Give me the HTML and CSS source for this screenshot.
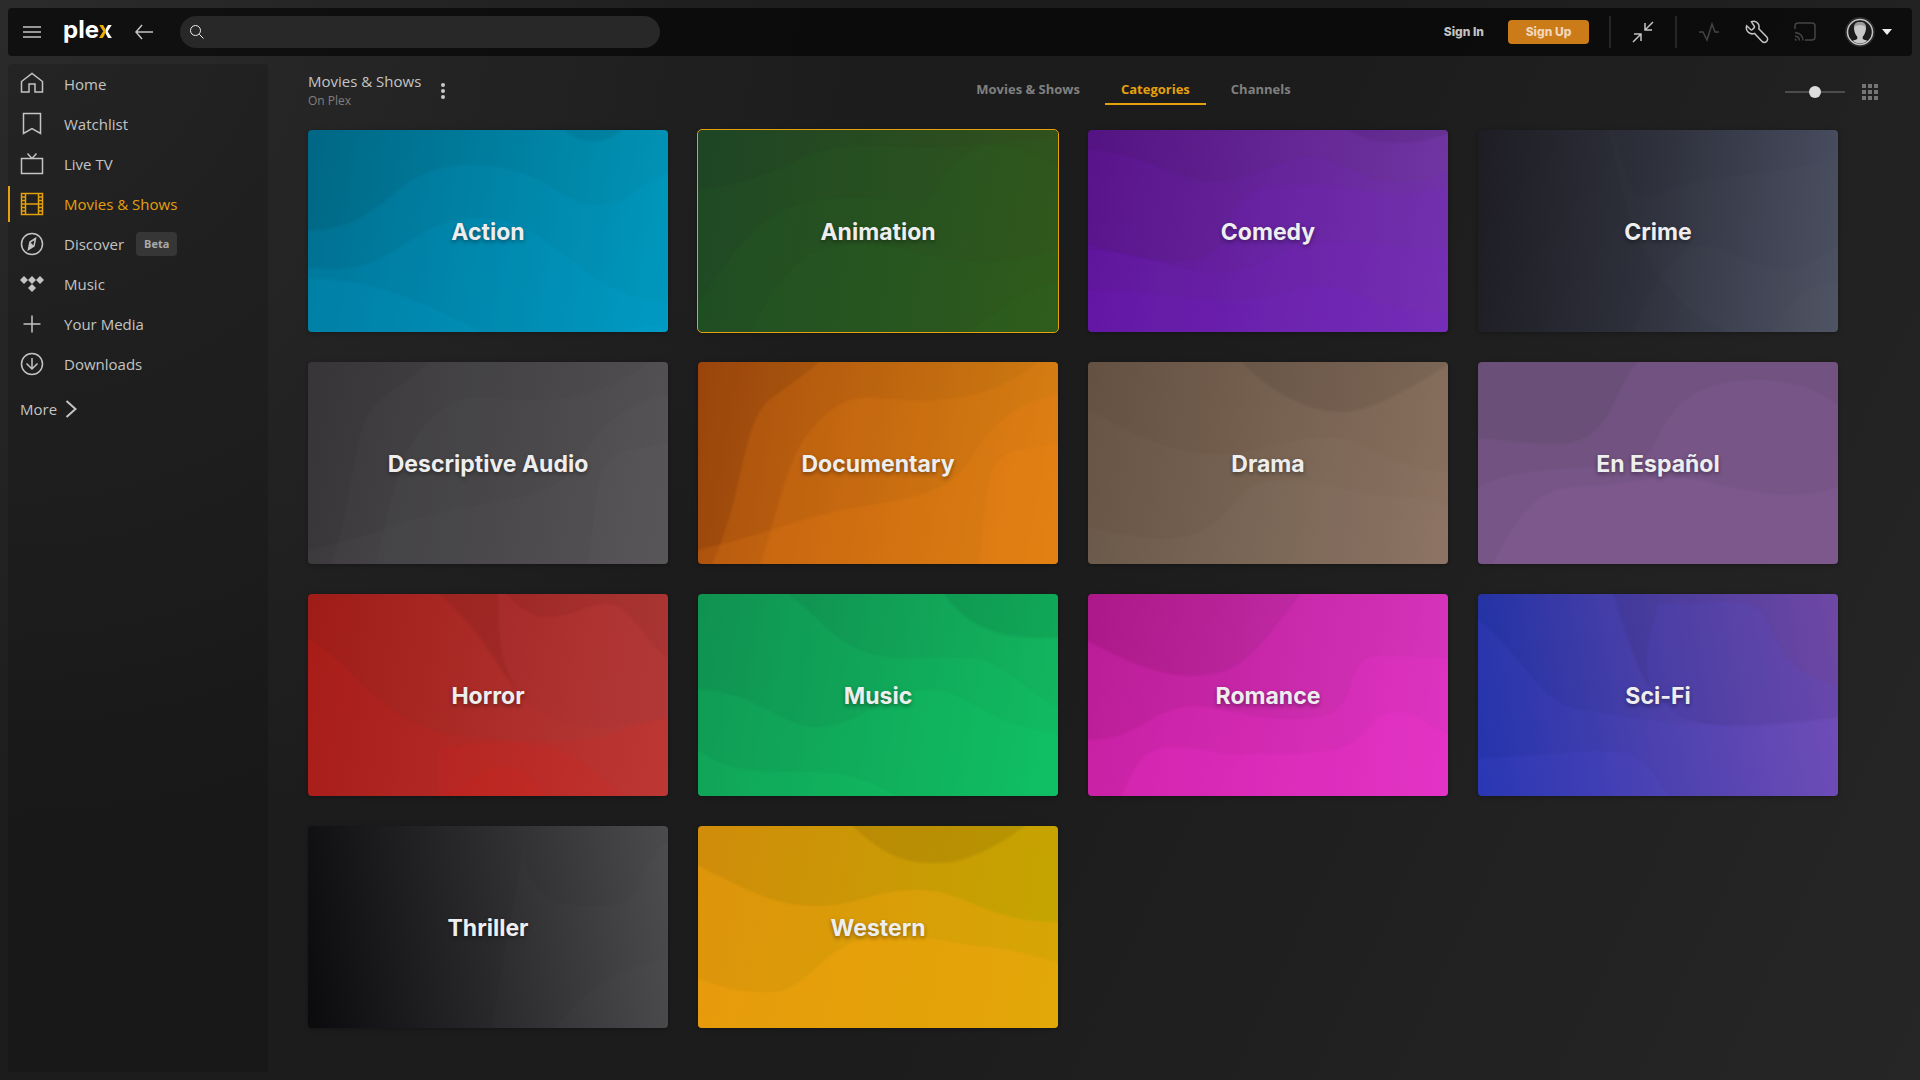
FILE: index.html
```html
<!DOCTYPE html>
<html lang="en">
<head>
    <meta charset="UTF-8">
    <meta name="viewport" content="width=device-width, initial-scale=1.0">
    <title>Plex</title>
    <link rel="stylesheet" href="styles.css">
</head>
<body>
    <header class="navbar">
        <button class="icon-btn menu-btn" aria-label="Menu">
            <svg width="18" height="12" viewBox="0 0 18 12"><path d="M0 1h18M0 6h18M0 11h18"/></svg>
        </button>
        <a href="#" class="logo">ple<span>x</span></a>
        <button class="icon-btn back-btn" aria-label="Back">
            <svg width="20" height="16" viewBox="0 0 20 16"><path d="M19 8H2M8 1L2 8l6 7"/></svg>
        </button>
        <label class="search">
            <svg width="16" height="16" viewBox="0 0 16 16"><circle cx="6.5" cy="6.5" r="5"/><path d="M10.3 10.3L14.500 14.500"/></svg>
            <input type="search" aria-label="Search">
        </label>

        <div class="nav-right">
            <a href="#" class="sign-in">Sign In</a>
            <button class="sign-up">Sign Up</button>
            <div class="divider"></div>
            <button class="icon-btn" aria-label="Collapse">
                <svg width="22" height="22" viewBox="0 0 22 22"><path d="M21 1l-8 8M13 2v7h7M1 21l8-8M2 13h7v7"/></svg>
            </button>
            <div class="divider"></div>
            <button class="icon-btn dim" aria-label="Activity">
                <svg width="22" height="20" viewBox="0 0 22 20"><path d="M1 10h4l4 8 5-16 3 8h4"/></svg>
            </button>
            <button class="icon-btn" aria-label="Settings">
                <svg width="24" height="24" viewBox="0 0 24 24"><path d="M6.500 1.800C8.800.8 11.500 1.500 13 3.500c1.200 1.600 1.300 3.400.8 5.200l8 8.200c1.300 1.500.9 3.600-.4 4.700-1.300 1.100-3.100 1-4.300-.2l-7.600-8c-2.400.9-5 .3-6.700-1.600C1.200 10 1 7.800 1.700 5.800l3.900 3.700c.5.5 1.300.5 1.800 0l1.600-1.600c.6-.6.6-1.400 0-2z"/></svg>
            </button>
            <button class="icon-btn dim" aria-label="Cast">
                <svg width="22" height="20" viewBox="0 0 22 20"><path d="M1 7V4q0-3 3-3h14q3 0 3 3v11q0 3-3 3h-7M1 10.500q7.500.5 8 8M1 14q4 .5 4.500 4.500M1 17l1.500 1.500"/></svg>
            </button>
            <button class="icon-btn account" aria-label="Account">
                <svg width="30" height="30" viewBox="0 0 30 30">
                    <circle class="ring-outer" cx="15" cy="15" r="15"/>
                    <circle class="ring" cx="15" cy="15" r="12.500"/>
                    <path class="face" d="M15 5c4 0 6.200 2.600 6 6.500-.2 3.700-1.600 6.500-3.300 8.200v2.100c1 1 3.200 1.300 4.600 2.200A12 12 0 0 1 7.700 24c1.400-.9 3.600-1.200 4.600-2.200v-2.100C10.600 18 9.200 15.200 9 11.500 8.800 7.600 11 5 15 5z"/>
                    <path class="hair" d="M9 11C9 7 11 5 15 5s6 2 6 6c-1-2-3-3-6-3s-5 1-6 3z"/>
                </svg>
                <svg class="caret" width="10" height="6" viewBox="0 0 10 6"><path d="M0 0h10L5 6z"/></svg>
            </button>
        </div>
    </header>

    <div class="layout">
        <nav class="sidebar">
            <a href="#" class="item">
                <svg width="24" height="24" viewBox="0 0 24 24"><path d="M1.500 9.500L12 1.500l10.500 8v10.500h-7.500v-8H9v8H1.500z"/></svg>
                Home
            </a>
            <a href="#" class="item">
                <svg width="24" height="24" viewBox="0 0 24 24"><path d="M3.500 1.500h17v20L12 16.500l-8.500 5z"/></svg>
                Watchlist
            </a>
            <a href="#" class="item">
                <svg width="24" height="24" viewBox="0 0 24 24"><path d="M1.500 6.500h21v15h-21zM7.500 1.500l4.500 5 4.500-5"/></svg>
                Live TV
            </a>
            <a href="#" class="item active">
                <svg width="24" height="24" viewBox="0 0 24 24"><path d="M1.500 1.500h21v21h-21zM5.500 1.500v21M18.500 1.500v21M5.500 12h13M1.500 5h4M1.500 8.500h4M1.500 12h4M1.500 15.500h4M1.500 19h4M18.500 5h4M18.500 8.500h4M18.500 12h4M18.500 15.500h4M18.500 19h4"/></svg>
                Movies &amp; Shows
            </a>
            <a href="#" class="item">
                <svg width="24" height="24" viewBox="0 0 24 24"><circle cx="12" cy="12" r="10.500"/><path d="M15.500 6.500L10 10l-1.500 7.500 5.500-3.500z"/><path class="solid" d="M10 10l4 4-5.500 3.500z"/></svg>
                Discover
                <span class="badge">Beta</span>
            </a>
            <a href="#" class="item">
                <svg width="24" height="24" viewBox="0 0 24 24"><path class="solid" d="M4 4l4 4-4 4-4-4zM12 4l4 4-4 4-4-4zM20 4l4 4-4 4-4-4zM12 12l4 4-4 4-4-4z"/></svg>
                Music
            </a>
            <a href="#" class="item">
                <svg width="24" height="24" viewBox="0 0 24 24"><path d="M12 3.500v17M3.500 12h17"/></svg>
                Your Media
            </a>
            <a href="#" class="item">
                <svg width="24" height="24" viewBox="0 0 24 24"><circle cx="12" cy="12" r="10.500"/><path d="M12 6v11M6.500 11.500l5.500 5.500 5.500-5.500"/></svg>
                Downloads
            </a>
            <a href="#" class="more">
                More
                <svg width="12" height="18" viewBox="0 0 12 18"><path d="M1.500 1l9 8-9 8"/></svg>
            </a>
        </nav>

        <main class="content">
            <div class="toolbar">
                <div class="heading">
                    <div>
                        <h1>Movies &amp; Shows</h1>
                        <p>On Plex</p>
                    </div>
                    <button class="icon-btn dots" aria-label="More actions">
                        <svg width="4" height="16" viewBox="0 0 4 16"><circle cx="2" cy="2" r="2"/><circle cx="2" cy="8" r="2"/><circle cx="2" cy="14" r="2"/></svg>
                    </button>
                </div>
                <div class="tabs">
                    <a href="#">Movies &amp; Shows</a>
                    <a href="#" class="selected">Categories</a>
                    <a href="#">Channels</a>
                </div>
                <div class="view">
                    <input type="range" min="0" max="100" value="50" aria-label="Card size">
                    <button class="icon-btn" aria-label="Grid view">
                        <svg class="squares" width="16" height="16" viewBox="0 0 16 16"><path d="M0 0h4v4H0zM6 0h4v4H6zM12 0h4v4h-4zM0 6h4v4H0zM6 6h4v4H6zM12 6h4v4h-4zM0 12h4v4H0zM6 12h4v4H6zM12 12h4v4h-4z"/></svg>
                    </button>
                </div>
            </div>

            <div class="grid">
                <a href="#" class="card action">
                    <svg class="waves" viewBox="0 0 360 202" preserveAspectRatio="none">
                        <path class="dark" d="M250 -9C265 18 305 18 320 -9z"/>
                        <path d="M-9 100C80 105 80 35 160 35S250 75 290 75 330 43 369 43V220H-9z"/>
                        <path d="M-9 135C90 155 90 90 170 88S270 172 369 172V220H-9z"/>
                        <path d="M-9 148C70 148 110 170 190 210V220H-9z"/>
                        <path d="M280 210Q320 195 369 193V220z"/>
                    </svg>
                    <span>Action</span>
                </a>
                <a href="#" class="card animation focused">
                    <svg class="waves" viewBox="0 0 360 202" preserveAspectRatio="none">
                        <path d="M-9 60C80 55 100 15 160 15S210 25 369 5V220H-9z"/>
                        <path d="M-9 190C50 90 80 68 150 68S230 80 240 55 280 15 300 15 350 30 369 40V220H-9z"/>
                        <path d="M50 210C90 120 120 110 180 115S270 150 369 115V220z"/>
                        <path d="M250 210C300 190 310 160 369 150V220z"/>
                    </svg>
                    <span>Animation</span>
                </a>
                <a href="#" class="card comedy">
                    <svg class="waves" viewBox="0 0 360 202" preserveAspectRatio="none">
                        <path class="dark" d="M250 -9C270 18 330 18 369 0V-9z"/>
                        <path d="M-9 20C60 20 80 50 120 52S190 28 220 27 270 52 310 52 340 45 369 40V220H-9z"/>
                        <path d="M-9 112C50 130 130 150 140 100S190 55 230 55 280 65 300 65 340 60 369 58V220H-9z"/>
                        <path d="M-9 120C60 120 90 143 130 143S190 115 230 112 300 120 369 118V220H-9z"/>
                        <path d="M-9 160C80 160 100 172 150 170S200 155 230 155 290 185 369 182V220H-9z"/>
                    </svg>
                    <span>Comedy</span>
                </a>
                <a href="#" class="card crime">
                    <svg class="waves" viewBox="0 0 360 202" preserveAspectRatio="none">
                        <path d="M130 -9C160 50 140 80 190 60S280 50 369 25V220C280 220 160 220 130 -9z"/>
                        <path d="M150 210C200 90 230 110 270 130S320 140 369 110V220z"/>
                        <path d="M290 210C310 170 330 150 369 150V220z"/>
                    </svg>
                    <span>Crime</span>
                </a>
                <a href="#" class="card descriptive">
                    <svg class="waves" viewBox="0 0 360 202" preserveAspectRatio="none">
                        <path d="M20 210C50 130 40 60 75 35S110 10 130 -9H369V220z"/>
                        <path d="M65 210C85 130 90 90 120 60S160 35 210 38 310 30 350 -9H369V220z"/>
                        <path d="M-9 190C80 170 100 155 160 145S250 130 270 100 310 40 369 30V220H-9z"/>
                        <path d="M280 210C290 130 285 95 320 88L369 80V220z"/>
                    </svg>
                    <span>Descriptive Audio</span>
                </a>
                <a href="#" class="card documentary">
                    <svg class="waves" viewBox="0 0 360 202" preserveAspectRatio="none">
                        <path d="M10 210C50 130 40 60 75 35S110 10 130 -9H369V220z"/>
                        <path d="M60 210C85 130 90 90 120 60S160 35 210 38 310 30 350 -9H369V220z"/>
                        <path d="M-9 190C80 170 100 155 160 145S250 130 270 100 310 40 369 30V220H-9z"/>
                        <path d="M280 210C290 130 285 95 320 88L369 80V220z"/>
                    </svg>
                    <span>Documentary</span>
                </a>
                <a href="#" class="card drama">
                    <svg class="waves" viewBox="0 0 360 202" preserveAspectRatio="none">
                        <path class="dark" d="M145 -9C190 40 230 50 255 50S320 30 369 -4V-9z"/>
                        <path d="M-9 42C60 80 90 92 130 92S200 75 240 75 300 108 369 110V220H-9z"/>
                        <path d="M-9 163C50 175 90 185 120 165S150 118 195 118 270 135 310 135 350 145 369 147V220H-9z"/>
                    </svg>
                    <span>Drama</span>
                </a>
                <a href="#" class="card espanol">
                    <svg class="waves" viewBox="0 0 360 202" preserveAspectRatio="none">
                        <path d="M-9 75C60 80 90 90 115 70S140 10 170 -9H369V220H-9z"/>
                        <path d="M-9 130C50 90 160 120 175 85S210 20 270 18 350 35 369 50V220H-9z"/>
                        <path d="M10 210C50 130 70 125 110 124S180 110 220 118 320 145 369 120V220z"/>
                    </svg>
                    <span>En Español</span>
                </a>
                <a href="#" class="card horror">
                    <svg class="waves" viewBox="0 0 360 202" preserveAspectRatio="none">
                        <path class="dark" d="M120 -9C185 40 190 90 230 115S300 135 369 122V-9z"/>
                        <path class="pale" d="M190 -9C220 25 230 24 250 22S300 -3 320 20 350 60 369 70V122C300 135 270 140 230 115S190 40 190 -9z"/>
                        <path d="M-9 42C50 60 60 140 180 145S260 150 369 120V220H-9z"/>
                        <path d="M130 155C260 135 270 165 330 215H130z"/>
                        <path d="M130 210C170 180 180 170 200 172S230 190 245 210z"/>
                    </svg>
                    <span>Horror</span>
                </a>
                <a href="#" class="card music">
                    <svg class="waves" viewBox="0 0 360 202" preserveAspectRatio="none">
                        <path class="dark" d="M240 -9C270 40 310 47 369 43V-9z"/>
                        <path d="M75 -9C130 20 130 63 210 64S280 60 310 80 350 110 369 118V220H-9V-9z"/>
                        <path d="M-9 95C60 95 80 133 120 133S190 95 230 95 290 135 369 140V220H-9z"/>
                        <path d="M-9 150C30 180 60 178 110 178S180 190 210 210H-9z"/>
                    </svg>
                    <span>Music</span>
                </a>
                <a href="#" class="card romance">
                    <svg class="waves" viewBox="0 0 360 202" preserveAspectRatio="none">
                        <path d="M-9 42C60 80 90 85 125 80S180 40 220 -9H369V220H-9z"/>
                        <path d="M-9 145C50 150 60 115 100 113S160 128 220 125 250 65 290 62L369 64V220H-9z"/>
                        <path d="M30 210C50 160 60 152 90 153S130 162 160 160 220 162 250 155 280 120 305 118 340 135 369 143V220z"/>
                    </svg>
                    <span>Romance</span>
                </a>
                <a href="#" class="card scifi">
                    <svg class="waves" viewBox="0 0 360 202" preserveAspectRatio="none">
                        <path class="dark" d="M132 -9C150 40 160 100 200 120S290 130 369 123V-9z"/>
                        <path d="M180 9C210 15 270 -3 285 20S300 80 369 94V123C290 130 240 135 200 120S165 60 180 9z"/>
                        <path d="M-9 20C40 50 60 110 100 115S200 140 369 123V220H-9z"/>
                        <path d="M-9 165C90 160 140 150 160 165S180 190 200 210H-9z"/>
                    </svg>
                    <span>Sci-Fi</span>
                </a>
                <a href="#" class="card thriller">
                    <svg class="waves" viewBox="0 0 360 202" preserveAspectRatio="none">
                        <path d="M220 -9C210 60 230 80 290 80S320 30 369 10V220H180z"/>
                        <path d="M240 210C270 170 300 140 369 130V220z"/>
                    </svg>
                    <span>Thriller</span>
                </a>
                <a href="#" class="card western">
                    <svg class="waves" viewBox="0 0 360 202" preserveAspectRatio="none">
                        <path class="dark" d="M145 -9C190 35 210 37 240 37S300 20 340 -9z"/>
                        <path d="M-9 35C60 70 80 80 120 80S180 62 225 64 290 98 369 96V220H-9z"/>
                        <path d="M-9 150C30 163 40 167 75 166S130 112 180 110 270 121 290 121 350 135 369 138V220H-9z"/>
                    </svg>
                    <span>Western</span>
                </a>
            </div>
        </main>
    </div>
</body>
</html>
```
FILE: styles.css
```css
*{
    margin: 0;
    padding: 0;
    box-sizing: border-box;
}
body{
    min-height: 100vh;
    padding: 8px 0;
    display: flex;
    flex-direction: column;
    gap: 8px;
    font-family: "Open Sans", "Noto Sans", sans-serif;
    font-size: 15px;
    line-height: 20px;
    color: #c4c4c4;
    background: radial-gradient(circle at 0 0, #2b2b2b 0, rgba(43, 43, 43, 0) 40%),
        linear-gradient(115deg, #1c1c1c 0, #1c1c1c 55%, #262626 100%);
}
a{
    color: inherit;
    text-decoration: none;
}
button{
    font: inherit;
    color: inherit;
    border: none;
    background: none;
    cursor: pointer;
}
svg{
    display: block;
    flex: none;
    fill: none;
    stroke: currentColor;
    stroke-width: 1.5;
}
.icon-btn{
    display: flex;
    align-items: center;
    justify-content: center;
}

/* top bar */
.navbar{
    height: 48px;
    margin: 0 8px;
    padding: 0 20px 0 15px;
    display: flex;
    align-items: center;
    border-radius: 4px;
    background: rgba(0, 0, 0, 0.6);
}
.menu-btn{
    width: 18px;
}
.logo{
    margin-left: 22px;
    width: 50px;
    font-family: "Inter", sans-serif;
    font-size: 24px;
    font-weight: 700;
    line-height: 28px;
    padding-bottom: 4px;
    color: #fff;
}
.logo span{
    color: transparent;
    background: linear-gradient(90deg, #ebaf00 60%, #fff 60%);
    background-clip: text;
    -webkit-background-clip: text;
}
.back-btn{
    margin-left: 21px;
}
.search{
    width: 480px;
    height: 32px;
    margin-left: 26px;
    padding: 0 9px;
    display: flex;
    align-items: center;
    gap: 8px;
    border-radius: 16px;
    background: #282828;
    color: #eee;
}
.search svg{
    stroke-width: 1;
}
.search input{
    flex: 1;
    min-width: 0;
    border: none;
    outline: none;
    background: transparent;
    color: #eee;
    font: inherit;
}
.nav-right{
    margin-left: auto;
    display: flex;
    align-items: center;
    gap: 24px;
}
.sign-in, .sign-up{
    font-family: "Inter", sans-serif;
    font-size: 12px;
    font-weight: 800;
}
.sign-up{
    width: 81px;
    height: 24px;
    border-radius: 4px;
    background: #cc7b19;
    color: #f0d7ba;
}
.divider{
    width: 2px;
    height: 32px;
    margin: 0 -4px;
    background: #262626;
}
.nav-right .icon-btn{
    min-width: 24px;
}
.nav-right .dim{
    color: #444;
}
.account{
    gap: 7px;
    margin-left: 4px;
}
.ring-outer{
    fill: #2b2b2b;
    stroke: none;
}
.ring{
    fill: #1c1c1c;
}
.face{
    fill: #c8c8c8;
    stroke: none;
}
.hair{
    fill: #999;
    stroke: none;
}
.caret{
    fill: #eee;
    stroke: none;
}

.layout{
    flex: 1;
    display: flex;
}

/* left menu */
.sidebar{
    width: 260px;
    margin-left: 8px;
    flex: none;
    border-radius: 4px;
    background: rgba(0, 0, 0, 0.14);
}
.item{
    height: 40px;
    padding-left: 12px;
    display: flex;
    align-items: center;
    position: relative;
}
.item svg{
    margin-right: 20px;
}
.item .solid{
    fill: currentColor;
    stroke: none;
}
.active{
    color: #e5a00d;
}
.active::before{
    content: "";
    position: absolute;
    left: 0;
    top: 2px;
    width: 2px;
    height: 36px;
    background: #e5a00d;
}
.badge{
    margin-left: 12px;
    padding: 2px 8px;
    border-radius: 4px;
    background: #363636;
    color: #aaa;
    font-size: 11px;
    font-weight: 700;
}
.more{
    height: 50px;
    padding-left: 12px;
    display: flex;
    align-items: center;
    gap: 8px;
}
.more svg{
    stroke-width: 2;
}

/* page */
.content{
    flex: 1;
    min-width: 0;
    padding-left: 40px;
}
.toolbar{
    height: 56px;
    padding-right: 42px;
    display: flex;
    align-items: center;
    justify-content: space-between;
}
.heading{
    width: 174px;
    display: flex;
    align-items: center;
    gap: 20px;
    padding-bottom: 3px;
}
.heading h1{
    font-size: 15px;
    font-weight: 400;
    line-height: 20px;
}
.heading p{
    font-size: 12px;
    color: #808080;
}
.dots svg{
    fill: #c8c8c8;
    stroke: none;
}
.tabs{
    display: flex;
    gap: 9px;
    font-size: 13px;
    font-weight: 700;
    color: #808080;
}
.tabs a{
    padding: 0 16px 4px;
    border-bottom: 2px solid transparent;
}
.tabs .selected{
    color: #e5a00d;
    border-color: #e5a00d;
}
.view{
    display: flex;
    align-items: center;
    gap: 17px;
    color: #757575;
}
.view input{
    width: 60px;
    height: 12px;
    appearance: none;
    -webkit-appearance: none;
    background: linear-gradient(#4c4c4c, #4c4c4c) center / 100% 2px no-repeat;
}
.view input::-webkit-slider-thumb{
    -webkit-appearance: none;
    width: 12px;
    height: 12px;
    border-radius: 50%;
    background: #ddd;
}
.squares{
    fill: currentColor;
    stroke: none;
}

/* category cards */
.grid{
    padding: 10px 82px 44px 0;
    display: grid;
    grid-template-columns: repeat(4, 1fr);
    gap: 30px;
}
.card{
    aspect-ratio: 360 / 202;
    display: grid;
    place-items: center;
    overflow: hidden;
    border-radius: 4px;
    box-shadow: 0 1px 4px rgba(0, 0, 0, 0.3);
    font-family: "Inter", sans-serif;
    font-size: 23px;
    font-weight: 700;
    line-height: 32px;
    color: #eee;
    text-shadow: 0 2px 4px rgba(0, 0, 0, 0.4);
}
.card > *{
    grid-area: 1 / 1;
}
.card span{
    z-index: 1;
    padding-top: 2px;
}
.focused{
    outline: 1px solid #e5a00d;
}
.waves{
    width: 100%;
    height: 100%;
    stroke: none;
    fill: #fff;
    fill-opacity: 0.03;
}
.waves path{
    filter: blur(1px);
}
.waves .dark{
    fill: #000;
    fill-opacity: 0.07;
}
.action{
    background: linear-gradient(100deg, #006785, #0096b9);
}
.action .waves{
    fill: #00a8e0;
    fill-opacity: 0.13;
}
.animation{
    background: linear-gradient(100deg, #1e4524, #33521c);
}
.animation .waves{
    fill: #2c7a2c;
    fill-opacity: 0.08;
}
.comedy{
    background: linear-gradient(100deg, #541382, #7238a4);
}
.comedy .waves{
    fill: #8020e0;
    fill-opacity: 0.1;
}
.crime{
    background: linear-gradient(95deg, #1e1d24, #2d2f3a 45%, #494e61);
}
.crime .waves{
    fill-opacity: 0.01;
}
.descriptive{
    background: linear-gradient(100deg, #373538, #504e51);
}
.descriptive .waves{
    fill-opacity: 0.015;
}
.documentary{
    background: linear-gradient(100deg, #9a440c, #c87c10);
}
.documentary .waves{
    fill: #ff8a18;
    fill-opacity: 0.16;
}
.drama{
    background: linear-gradient(100deg, #645142, #89705e);
}
.drama .waves{
    fill-opacity: 0.02;
}
.espanol{
    background: #6a4f78;
}
.espanol .waves{
    fill: #a070b8;
    fill-opacity: 0.13;
}
.horror{
    background: linear-gradient(100deg, #9f1c18, #b83c3a);
}
.horror .waves{
    fill: #e01c18;
    fill-opacity: 0.13;
}
.horror .waves .pale{
    fill: #ff5058;
    fill-opacity: 0.1;
}
.music{
    background: linear-gradient(100deg, #10884c, #12b860);
}
.music .waves{
    fill: #14e070;
    fill-opacity: 0.12;
}
.romance{
    background: linear-gradient(100deg, #ac1888, #ce36b8);
}
.romance .waves{
    fill: #ff30d8;
    fill-opacity: 0.18;
}
.scifi{
    background: linear-gradient(80deg, #1c30a4, #4c40a8 50%, #784eb2);
}
.scifi .waves{
    fill: #5a50e8;
    fill-opacity: 0.12;
}
.thriller{
    background: linear-gradient(80deg, #0b0a0c, #2a292b 50%, #4b4a4d);
}
.thriller .waves{
    fill-opacity: 0.01;
}
.western{
    background: linear-gradient(100deg, #d08c0a, #c4a600);
}
.western .waves{
    fill: #ffa810;
    fill-opacity: 0.3;
}
.western .waves .dark{
    fill: #000;
    fill-opacity: 0.08;
}
```
